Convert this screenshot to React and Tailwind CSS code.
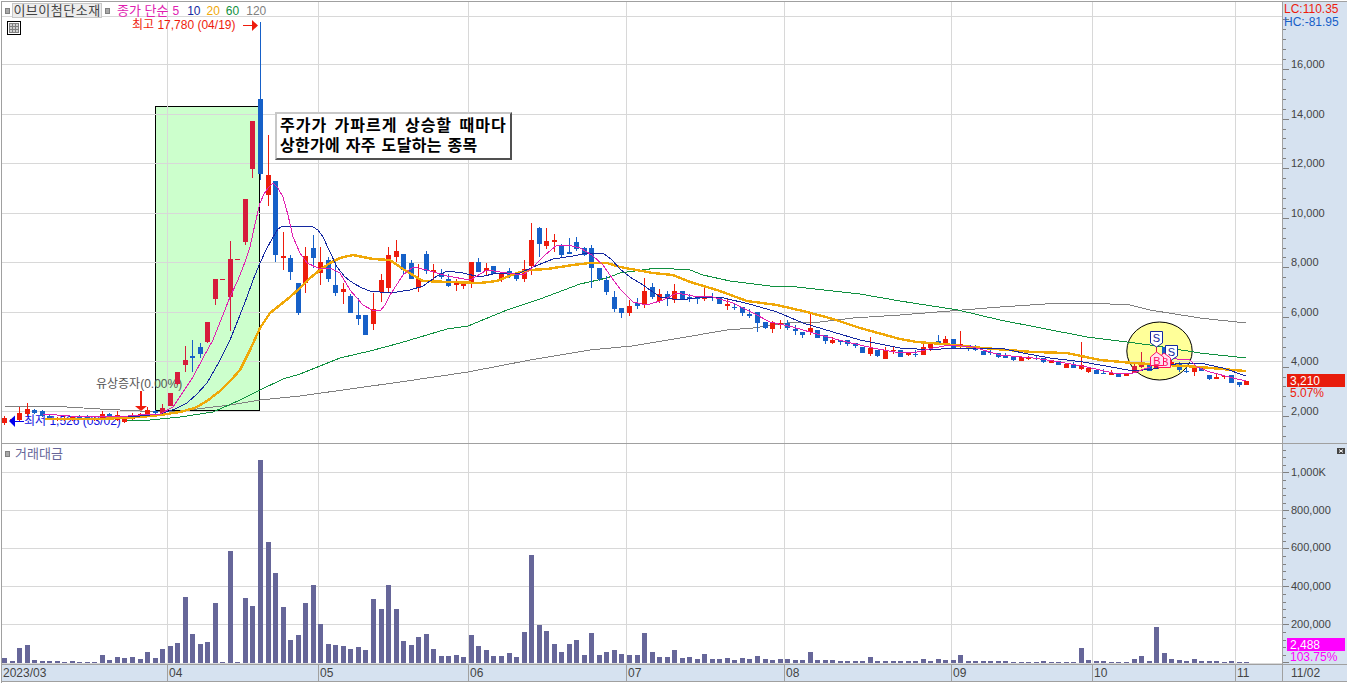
import React from "react";

const R = "#ee1c0c", B = "#1660c8", C = "#d61c3c";
const candles = [
  [418,423,416,425,R],[419,421,418,423,R],[413,420,407,421,R],[409,414,403,416,R],[410,413,409,414,B],[411,416,410,417,B],
  [416,418,415,419,B],[418,420,417,421,R],[418,419,416,421,R],[417,419,416,421,R],[416,418,415,419,B],[416,418,415,419,B],
  [418,420,417,421,R],[414,418,411,419,R],[414,416,413,417,B],[415,420,411,421,R],[417,422,416,423,R],[416,419,413,420,R],
  [414,417,413,418,R],[410,415,407,416,R],[411,413,410,414,B],[408,413,404,414,C],[393,406,393,406,C],[372,384,372,385,C],
  [360,365,346,372,C],[356,358,340,372,B],[347,354,343,358,B],[322,342,322,343,C],[279,299,279,305,C],[279,280,279,280,C],
  [259,297,241,331,C],[259,260,259,260,C],[199,242,199,245,C],[121,169,121,178,C],[99,174,22,180,B],[175,195,135,206,R],
  [181,255,181,262,B],[256,258,232,270,R],[258,272,255,280,B],[283,313,283,315,B],[256,283,247,293,R],[248,258,235,268,B],
  [262,273,247,285,R],[260,279,257,282,B],[285,293,262,296,B],[289,292,283,304,R],[296,313,294,313,B],[315,319,298,325,B],
  [315,335,315,335,B],[309,324,293,330,R],[280,292,274,302,R],[255,288,247,293,R],[251,257,240,262,R],[254,270,254,274,B],
  [263,279,260,279,B],[278,288,264,292,R],[254,271,251,274,B],[270,272,264,280,R],[273,277,269,279,B],[279,286,274,287,B],
  [283,285,279,291,R],[283,286,281,289,R],[262,283,262,288,R],[262,272,258,272,B],[268,271,263,276,R],[266,274,266,274,B],
  [274,279,274,282,R],[271,276,268,278,B],[273,279,273,281,B],[269,279,260,282,R],[240,266,223,275,R],[228,244,227,257,B],
  [241,246,228,249,R],[240,242,234,252,R],[246,255,244,257,B],[252,254,238,254,B],[242,249,237,251,B],[248,255,247,256,B],
  [248,268,245,288,B],[268,279,268,281,B],[280,292,276,295,B],[297,309,291,312,B],[308,313,308,318,B],[306,313,300,316,R],
  [303,306,298,309,B],[291,305,278,308,R],[287,297,283,299,B],[294,301,289,303,R],[294,299,291,306,B],[291,300,284,303,R],
  [291,299,291,299,B],[297,299,294,302,B],[297,299,297,304,B],[296,299,288,301,R],[297,298,293,301,B],[298,304,298,304,B],
  [304,306,299,310,R],[307,308,303,310,B],[307,313,307,316,B],[314,316,309,318,B],[312,323,312,332,B],[322,328,322,329,B],
  [323,329,321,333,R],[323,325,320,329,R],[323,328,320,330,B],[329,331,325,335,B],[332,335,332,338,B],[328,332,313,335,R],
  [330,338,330,338,B],[335,341,335,344,B],[340,343,337,344,R],[340,342,340,345,B],[340,344,340,346,B],[343,346,343,348,B],
  [347,353,347,353,B],[348,354,337,356,R],[350,356,350,357,B],[350,359,347,359,R],[350,351,346,354,R],[350,357,350,357,B],
  [353,355,353,356,R],[354,355,350,357,B],[347,355,343,355,R],[344,348,344,351,R],[341,343,335,344,B],[339,343,336,345,R],
  [339,348,339,348,B],[344,346,331,348,R],[345,349,345,351,B],[347,350,345,351,B],[351,355,351,355,B],[352,353,349,355,B],
  [353,357,353,358,B],[355,358,353,358,B],[357,360,357,361,B],[357,361,357,361,R],[358,359,356,360,R],[358,359,355,360,B],
  [358,362,358,363,B],[360,363,360,363,R],[361,365,361,365,B],[364,368,364,368,R],[365,368,362,368,B],[365,369,342,370,R],
  [368,372,368,373,R],[370,374,370,374,B],[373,374,369,374,B],[373,375,370,375,R],[373,377,373,377,B],[373,376,373,376,R],
  [366,373,362,373,C],[363,367,352,368,C],[364,371,364,371,B],[366,369,347,369,C],[347,355,347,355,B],[362,364,360,366,R],
  [364,370,362,372,B],[371,372,368,373,B],[367,372,363,376,R],[367,371,367,371,B],[375,379,375,380,B],[377,379,373,379,R],
  [376,377,375,379,R],[375,383,375,383,B],[382,385,382,387,B],[381,385,381,385,R],
];
const vols = [658,661,648,645,660,661,661,661,662,661,662,662,662,655,660,657,658,657,659,652,658,649,646,643,597,634,644,642,603,662,551,662,598,606,460,542,573,607,640,635,603,585,624,644,645,
  646,649,647,650,599,609,585,609,641,645,637,634,649,656,656,655,657,635,646,650,656,656,653,657,632,555,625,631,644,652,644,640,655,633,655,652,650,654,655,655,633,652,657,657,650,658,657,659,654,659,659,658,660,
  658,659,656,659,660,659,659,660,660,652,660,660,660,661,661,661,661,657,661,661,661,661,661,661,659,661,659,660,660,655,661,661,661,661,661,661,662,662,662,662,661,662,662,662,662,648,660,661,661,662,662,662,659,656,
  661,627,653,659,660,661,659,661,661,661,662,661,662,662];
const xOf = (i) => Math.round(4 + 7.53 * i);

const ma5 = "43,414 70,416 117,417 140,415 160,414 173,407 183,392 193,377 203,358 213,340 230,297 238,280 245,262 250,247 255,224 260,203 264,194 268,188 273,183 278,188 283,197 288,215 293,237 300,253 307,263 318,268 330,268 340,273 350,290 363,305 372,310 380,311 385,305 390,295 403,275 413,267 427,270 447,276 470,280 487,270 507,273 523,275 533,267 545,255 557,245 568,245 580,248 592,255 603,265 612,278 620,289 633,302 647,305 663,300 677,293 693,296 713,297 733,303 753,313 770,322 793,327 820,335 847,342 873,348 900,353 917,352 933,348 950,345 973,347 1000,355 1033,358 1060,362 1087,367 1113,373 1133,373 1150,367 1157,358 1177,359 1190,360 1197,367 1210,372 1233,378 1246,381";
const ma10 = "115,416 140,416 160,414 175,409 187,403 197,394 207,383 219,362 230,340 240,315 247,297 253,280 260,263 266,250 273,237 278,229 283,226 295,226 305,226 313,227 318,230 323,237 330,252 337,267 345,277 353,283 362,288 370,291 390,293 410,290 423,286 437,276 447,271 463,273 480,277 497,273 520,273 533,267 553,259 573,256 587,253 603,253 612,260 620,269 630,277 643,285 660,297 680,300 703,297 720,297 753,305 777,312 803,323 833,332 860,340 900,348 933,350 950,348 1000,348 1023,353 1050,358 1083,362 1117,368 1133,371 1153,369 1180,363 1200,363 1223,368 1246,376";
const ma20 = "45,419 100,419 140,417 160,415 180,412 195,408 207,401 220,391 232,379 240,370 250,350 260,328 270,313 280,305 290,297 300,288 310,278 320,270 330,263 340,258 353,255 373,259 390,260 403,269 423,281 450,282 480,283 497,281 517,273 530,270 547,269 573,265 590,263 607,263 620,267 653,273 673,275 690,282 717,290 747,301 777,305 807,312 833,319 860,328 900,339 917,342 943,344 983,348 1033,352 1067,353 1100,360 1133,363 1167,365 1200,367 1233,370 1246,371";
const ma60 = "122,421 150,420 180,417 213,412 240,400 260,390 283,379 300,374 320,366 340,358 370,351 400,343 447,329 468,326 507,310 540,299 580,284 607,278 620,273 657,268 690,270 703,275 730,281 770,286 797,287 860,294 900,301 958,310 1000,320 1087,337 1127,342 1150,345 1200,353 1246,358";
const ma120 = "5,406 50,406 100,409 140,411 180,411 230,405 260,400 300,396 350,389 400,382 468,372 530,360 590,350 632,346 680,338 727,330 753,328 787,323 820,322 853,318 900,315 950,311 1000,307 1060,303 1090,303 1130,305 1150,310 1200,318 1246,323";

const hGrid = [16, 64, 114, 163, 213, 262, 312, 361, 411];
const vGrid = [167, 318, 468, 626, 784, 951, 1092, 1235];
const priceLabels = [[64, "16,000"], [114, "14,000"], [163, "12,000"], [213, "10,000"], [262, "8,000"], [312, "6,000"], [361, "4,000"], [411, "2,000"]];
const volLabels = [[472, "1,000K"], [510, "800,000"], [547, "600,000"], [586, "400,000"], [624, "200,000"]];

const Line = ({ pts, color, w = 1 }) => (
  <polyline points={pts} fill="none" stroke={color} strokeWidth={w} shapeRendering="crispEdges" />
);

function Ticks({ from, to, step, offset, major }) {
  const out = [];
  for (let y = from, n = 0; y <= to; y += step, n++) {
    const big = n % major === offset;
    out.push(<rect key={n} x="1283" y={Math.round(y)} width={big ? 6 : 3} height="1" fill="#808080" />);
  }
  return out;
}

const Square = () => <span className="block w-[5px] h-[6px] bg-[#a8a8a8] border border-[#808080]" />;

const months = [
  ["2023/03", "w-[165px]"], ["04", "w-[151px]"], ["05", "w-[150px]"], ["06", "w-[158px]"], ["07", "w-[158px]"],
  ["08", "w-[167px]"], ["09", "w-[141px]"], ["10", "w-[143px]"], ["11", "w-[47px]"],
];

export default function App() {
  return (
    <div className="w-[1347px] h-[683px] overflow-hidden bg-white pl-px pt-px text-[#444] text-[12px] leading-none [font-family:'Liberation_Sans','Noto_Sans_CJK_KR',sans-serif]">
      <div className="h-[682px] flex flex-col border-l border-t border-[#a0a0a0]">
        {/* price pane */}
        <div className="flex h-[441px]">
          <div className="relative w-[1280px]">
            <svg viewBox="2 2 1280 441" width="1280" height="441" className="block">
              <rect x="155.5" y="106.5" width="104" height="304" fill="#ccffcc" stroke="#000" shapeRendering="crispEdges" />
              <ellipse cx="1159.5" cy="351" rx="32.7" ry="29" fill="#ffff99" stroke="#000" />
              {hGrid.map((y) => <rect key={y} x="2" y={y} width="1280" height="1" fill="#d8d8d8" />)}
              {vGrid.map((x) => <rect key={x} x={x} y="2" width="1" height="441" fill="#d8d8d8" />)}
              <text x="24" y="425" fontSize="12" fill="#1010e0">최저 1,526 (03/02)</text>
              <text x="96" y="388" fontSize="12" fill="#555">유상증자(0.00%)</text>
              <Line pts={ma120} color="#808080" />
              <Line pts={ma60} color="#109040" />
              {candles.map(([t, b, h, l, c], i) => {
                const x = xOf(i);
                return (
                  <g key={i} fill={c}>
                    <rect x={x} y={h} width="1" height={l - h} />
                    <rect x={x - 2} y={t} width="5" height={b - t} />
                  </g>
                );
              })}
              <Line pts={ma20} color="#f0a808" w={2.4} />
              <Line pts={ma10} color="#1428a0" />
              <Line pts={ma5} color="#e020b0" />
              {/* arrows */}
              <rect x="243" y="25" width="10" height="1" fill="#ee1c0c" />
              <polygon points="252,20 258,25.5 252,31" fill="#ee1c0c" />
              <rect x="140" y="391" width="2" height="15" fill="#ee1c0c" />
              <polygon points="135,406 147,406 141,411" fill="#ee1c0c" />
              <rect x="14" y="421" width="10" height="1" fill="#0000ee" />
              <polygon points="15,415.5 15,427 9,421" fill="#0000ee" />
              {/* trade markers */}
              <g fontSize="11" textAnchor="middle">
                <polygon points="1150.5,331.5 1162.5,331.5 1162.5,343 1156.5,347 1150.5,343" fill="#fff" stroke="#1428a0" />
                <text x="1156.5" y="342" fill="#1428a0">S</text>
                <polygon points="1165.5,345.5 1177.5,345.5 1177.5,356 1171.5,360 1165.5,356" fill="#fff" stroke="#1428a0" />
                <text x="1171.5" y="356" fill="#1428a0">S</text>
                <polygon points="1164,353 1170.5,358 1170.5,367.5 1158,367.5 1158,358" fill="#ffe0f0" stroke="#ff1060" />
                <text x="1165" y="366" fill="#ff1060">B</text>
                <polygon points="1156.5,352 1163.5,357 1163.5,365.5 1150.5,365.5 1150.5,357" fill="#ffe0f0" stroke="#ff1060" />
                <text x="1157" y="365" fill="#ff1060">B</text>
              </g>
              {/* candlestick pane toggle */}
              <g shapeRendering="crispEdges">
                <rect x="7.5" y="21.5" width="13" height="13" fill="#fff" stroke="#000" />
                <rect x="9" y="23" width="10" height="10" fill="#d0d0d0" />
                <path d="M9 23.5H19M9 26.5H19M9 29.5H19M9 32.5H19M9.5 23V33M12.5 23V33M15.5 23V33M18.5 23V33" stroke="#808080" fill="none" />
              </g>
            </svg>
            {/* legend */}
            <div className="absolute left-[3px] top-px flex items-center h-[15px] text-[12px] text-[#666]">
              <Square />
              <span className="ml-[2px] h-[15px] w-[90px] flex items-center justify-center bg-[#ececec] border border-[#c8c8c8] text-[13px] text-[#444] tracking-[0.5px]">이브이첨단소재</span>
              <span className="ml-[3px]"><Square /></span>
              <span className="ml-[7px] text-[#e020b0] text-[13px]">종가 단순</span>
              <span className="ml-[4px] text-[#e020b0]">5</span>
              <span className="ml-[8px] text-[#1428a0]">10</span>
              <span className="ml-[6px] text-[#f0a808]">20</span>
              <span className="ml-[6px] text-[#109040]">60</span>
              <span className="ml-[7px] text-[#808080]">120</span>
            </div>
            <span className="absolute left-[130px] top-[17px] text-[#ee1c0c] whitespace-nowrap">최고 17,780 (04/19)</span>
            {/* callout */}
            <div className="absolute left-[273px] top-[110px] w-[237px] h-[48px] bg-white border-2 border-t-[#c8c8c8] border-l-[#c8c8c8] border-r-[#505050] border-b-[#505050] pl-[3px] pt-[2px] text-black font-bold text-[16px] leading-[20px] whitespace-nowrap">
              <div className="tracking-[1px] [word-spacing:2px]">주가가 가파르게 상승할 때마다</div>
              <div className="tracking-[0.3px] [word-spacing:1px]">상한가에 자주 도달하는 종목</div>
            </div>
          </div>
          <div className="relative flex-1 bg-[#d6e2f0] border-l border-[#a0a0a0]">
            <svg viewBox="1283 2 64 441" width="64" height="441" className="block">
              <Ticks from={19.4} to={440} step={9.92} offset={0} major={5} />
              <g fontSize="11" fill="#444">
                {priceLabels.map(([y, s]) => <text key={y} x="1291" y={y + 4}>{s}</text>)}
              </g>
              <g fontSize="12">
                <text x="1284" y="13" fill="#ee1c0c">LC:110.35</text>
                <text x="1284" y="26" fill="#1660c8">HC:-81.95</text>
              </g>
            </svg>
            <div className="absolute left-[4px] top-[372px] w-[58px] h-[13px] bg-[#e81c0c] text-white pl-[3px] flex items-center">3,210</div>
            <div className="absolute left-[7px] top-[385px] text-[#ee1c0c]">5.07%</div>
          </div>
        </div>
        {/* pane separator */}
        <div className="h-px bg-[#a0a0a0]" />
        {/* volume pane */}
        <div className="flex h-[220px]">
          <div className="relative w-[1280px]">
            <svg viewBox="2 444 1280 220" width="1280" height="220" className="block">
              {[472, 510, 548, 586, 624, 663].map((y) => <rect key={y} x="2" y={y} width="1280" height="1" fill="#d8d8d8" />)}
              {vGrid.map((x) => <rect key={x} x={x} y="444" width="1" height="220" fill="#d8d8d8" />)}
              {vols.map((t, i) => <rect key={i} x={xOf(i) - 2} y={t} width="5" height={663 - t} fill="#666699" />)}
            </svg>
            <div className="absolute left-[3px] top-[3px] flex items-center gap-[5px] text-[13px] text-[#666699]">
              <Square />
              <span>거래대금</span>
            </div>
          </div>
          <div className="relative flex-1 bg-[#d6e2f0] border-l border-[#a0a0a0]">
            <svg viewBox="1283 444 64 220" width="64" height="220" className="block">
              <Ticks from={449.6} to={664} step={7.6} offset={3} major={5} />
              <g fontSize="11" fill="#444">
                {volLabels.map(([y, s]) => <text key={y} x="1291" y={y + 4}>{s}</text>)}
              </g>
              <rect x="1337" y="448" width="8" height="6" fill="#444" />
              <path d="M1339 449.5L1343 452.5M1343 449.5L1339 452.5" stroke="#fff" fill="none" />
            </svg>
            <div className="absolute left-[4px] top-[194px] w-[58px] h-[13px] bg-[#ff00ff] text-white pl-[3px] flex items-center">2,488</div>
            <div className="absolute left-[7px] top-[207px] text-[#ff00ff]">103.75%</div>
          </div>
        </div>
        {/* date axis */}
        <div className="flex h-[18px] bg-[#d6e2f0] border-t border-b border-[#a0a0a0]">
          {months.map(([m, w], i) => (
            <div key={m} className={`${w} ${i ? "border-l border-[#a0a0a0]" : ""} pl-[1px] flex items-center`}>{m}</div>
          ))}
          <div className="flex-1 border-l border-[#a0a0a0] pl-[8px] flex items-center">11/02</div>
        </div>
      </div>
    </div>
  );
}
